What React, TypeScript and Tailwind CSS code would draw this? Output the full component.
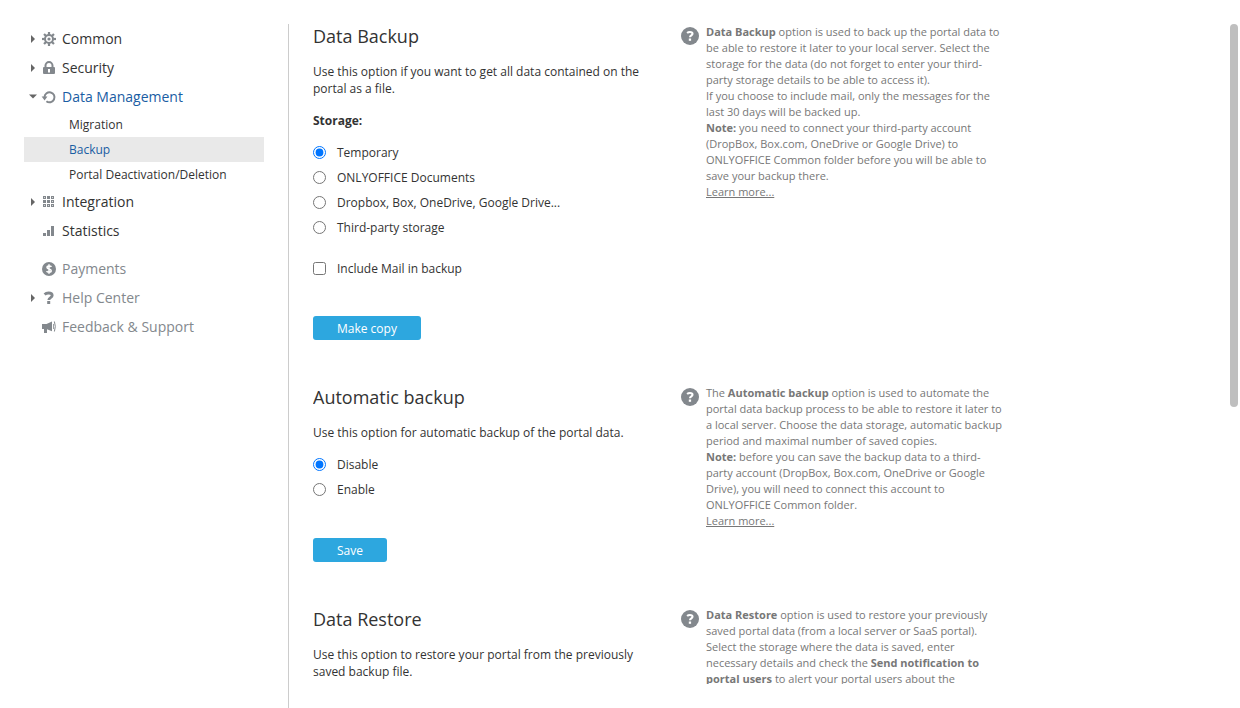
import type { ReactNode } from "react";

const ICON = "h-4 w-4 shrink-0 fill-[#83888d]";

function GearIcon() {
  const spokes = [0, 45, 90, 135, 180, 225, 270, 315];
  return (
    <svg viewBox="0 0 16 16" className={ICON} aria-hidden="true">
      <circle cx="8" cy="8" r="4" fill="none" stroke="#83888d" strokeWidth="2" />
      <circle cx="8" cy="8" r="1.6" />
      {spokes.map((angle) => (
        <rect key={angle} x="6.9" y="1" width="2.2" height="2.8" transform={`rotate(${angle} 8 8)`} />
      ))}
    </svg>
  );
}

function LockIcon() {
  return (
    <svg viewBox="0 0 16 16" className={ICON} aria-hidden="true">
      <path
        fillRule="evenodd"
        d="M3.5 7V5.6a4.5 4.5 0 0 1 9 0V7h.5q1 0 1 1v5q0 1-1 1H3q-1 0-1-1V8q0-1 1-1zM5.5 7h5V5.6a2.5 2.5 0 0 0-5 0zM7 9v3.4h2V9z"
      />
    </svg>
  );
}

function RestoreIcon() {
  return (
    <svg viewBox="0 0 16 16" className={ICON} aria-hidden="true">
      <path d="M3.5 8a5 5 0 1 1 1.9 4.2" fill="none" stroke="#83888d" strokeWidth="2" />
      <path d="M.6 7.4h5.8L3.6 11.4z" />
    </svg>
  );
}

function GridIcon() {
  const cells = [2, 6, 10];
  return (
    <svg viewBox="0 0 16 16" className={ICON} aria-hidden="true">
      {cells.map((y) => cells.map((x) => <rect key={`${x}-${y}`} x={x} y={y} width="3" height="3" />))}
      {[3, 11].map((y) => [3, 11].map((x) => <rect key={`${x}-${y}`} x={x} y={y} width="1" height="1" fill="#d5d7d9" />))}
      {[[7, 11], [11, 7]].map(([x, y]) => <rect key={`${x}-${y}`} x={x} y={y} width="1" height="1" fill="#d5d7d9" />)}
    </svg>
  );
}

function ChartIcon() {
  return (
    <svg viewBox="0 0 16 16" className={ICON} aria-hidden="true">
      <path d="M2 10h3v3H2zM6 7h3v6H6zM10 3h3v10h-3z" />
    </svg>
  );
}

function DollarIcon() {
  return (
    <svg viewBox="0 0 16 16" className={ICON} aria-hidden="true">
      <circle cx="8" cy="8" r="7" />
      <path
        d="M10.4 5.9C9.9 4.9 6 4.4 6 6.5c0 1.8 4.2 1.2 4.2 3.2 0 2-3.9 1.8-4.6.5M8 3.2v9.6"
        fill="none"
        stroke="#fff"
        strokeWidth="1.5"
      />
    </svg>
  );
}

function QuestionIcon() {
  return (
    <svg viewBox="0 0 16 16" className={ICON} aria-hidden="true">
      <path d="M3.6 4.4C4.6 3.4 6 3 7.6 3c2.4 0 3.6.9 3.6 2.5 0 2.2-3.4 2-3.4 4.5" fill="none" stroke="#83888d" strokeWidth="2.8" />
      <rect x="6.2" y="11" width="3" height="3" />
    </svg>
  );
}

function MegaphoneIcon() {
  return (
    <svg viewBox="0 0 16 16" className={ICON} aria-hidden="true">
      <path d="M1 5h4.5L11 2.5v9.8L6 10.2V14H3v-4H1z" />
      <path d="M12.5 5v5" fill="none" stroke="#83888d" strokeWidth="0.8" />
      <path d="M13.4 2.5q1.8 5 0 10" fill="none" stroke="#83888d" />
    </svg>
  );
}

function HelpBadge() {
  return (
    <svg viewBox="0 0 18 18" className="mt-[3px] h-[18px] w-[18px] shrink-0 fill-[#83888d]" aria-hidden="true">
      <circle cx="9" cy="9" r="9" />
      <path d="M6.1 6C6.9 5.3 7.8 5 8.9 5c1.7 0 2.6.6 2.6 1.8 0 1.6-2.5 1.5-2.5 3.5" fill="none" stroke="#fff" strokeWidth="2.1" />
      <rect x="7.8" y="11.5" width="2.3" height="2.3" fill="#fff" />
    </svg>
  );
}

type NavRowProps = {
  icon: ReactNode;
  label: string;
  arrow?: "right" | "down";
  tone?: "normal" | "active" | "muted";
};

const TONES = { normal: "text-[#333]", active: "text-[#1a5da3]", muted: "text-[#83888d]" };

function NavRow({ icon, label, arrow, tone = "normal" }: NavRowProps) {
  return (
    <a href="#" className={`flex h-[29px] items-center pl-[5px] text-sm ${TONES[tone]}`}>
      <svg viewBox="0 0 8 8" className="mr-1 h-2 w-2 shrink-0 fill-[#666]" aria-hidden="true">
        {arrow === "right" && <path d="M2 0v8L6 4z" />}
        {arrow === "down" && <path d="M0 1.5h8L4 5.5z" />}
      </svg>
      {icon}
      <span className="ml-[5px]">{label}</span>
    </a>
  );
}

function SubRow({ label, selected }: { label: string; selected?: boolean }) {
  return (
    <a
      href="#"
      className={`flex h-[25px] items-center pl-[45px] ${selected ? "bg-[#e9e9e9] text-[#1a5da3]" : ""}`}
    >
      {label}
    </a>
  );
}

function Choice({ type = "radio", name, label, checked }: { type?: string; name: string; label: string; checked?: boolean }) {
  return (
    <label className="flex h-[25px] items-center gap-[11px]">
      <input type={type} name={name} defaultChecked={checked} className="m-0 h-[13px] w-[13px]" />
      {label}
    </label>
  );
}

function ActionButton({ children }: { children: ReactNode }) {
  return (
    <button type="button" className="block h-6 rounded-[3px] bg-[#2da7df] px-6 text-white">
      {children}
    </button>
  );
}

function Section({ title, help, children }: { title: string; help: ReactNode; children: ReactNode }) {
  return (
    <section className="mb-[45px] flex gap-6">
      <div className="w-[344px]">
        <h2 className="mb-[15px] text-lg leading-6">{title}</h2>
        {children}
      </div>
      <aside className="flex w-[325px] gap-[7px] text-[11px] leading-4 text-[#777]">
        <HelpBadge />
        <div>{help}</div>
      </aside>
    </section>
  );
}

function LearnMore() {
  return (
    <a href="#" className="block underline">
      Learn more...
    </a>
  );
}

export default function App() {
  return (
    <div className="flex h-screen bg-white pt-6 pl-6 font-['Open_Sans',sans-serif] text-xs leading-[17px] text-[#333]">
      <nav className="w-60 shrink-0">
        <NavRow icon={<GearIcon />} label="Common" arrow="right" />
        <NavRow icon={<LockIcon />} label="Security" arrow="right" />
        <NavRow icon={<RestoreIcon />} label="Data Management" arrow="down" tone="active" />
        <div className="pt-px">
          <SubRow label="Migration" />
          <SubRow label="Backup" selected />
          <SubRow label="Portal Deactivation/Deletion" />
        </div>
        <NavRow icon={<GridIcon />} label="Integration" arrow="right" />
        <NavRow icon={<ChartIcon />} label="Statistics" />
        <div className="pt-[9px]">
          <NavRow icon={<DollarIcon />} label="Payments" tone="muted" />
          <NavRow icon={<QuestionIcon />} label="Help Center" arrow="right" tone="muted" />
          <NavRow icon={<MegaphoneIcon />} label="Feedback & Support" tone="muted" />
        </div>
      </nav>

      <div className="ml-6 flex min-w-0 flex-1 border-l border-[#ccc] pr-0.5 pb-6 pl-6">
        <main className="min-w-0 flex-1 overflow-x-hidden overflow-y-auto [scrollbar-width:none]">
          <Section
            title="Data Backup"
            help={
              <>
                <p>
                  <b>Data Backup</b> option is used to back up the portal data to be able to restore it later to your
                  local server. Select the storage for the data (do not forget to enter your third-party storage
                  details to be able to access it).
                </p>
                <p>If you choose to include mail, only the messages for the last 30 days will be backed up.</p>
                <p>
                  <b>Note:</b> you need to connect your third-party account (DropBox, Box.com, OneDrive or Google
                  Drive) to ONLYOFFICE Common folder before you will be able to save your backup there.
                </p>
                <LearnMore />
              </>
            }
          >
            <p>Use this option if you want to get all data contained on the portal as a file.</p>
            <fieldset>
              <legend className="pt-[15px] pb-[11px] font-bold">Storage:</legend>
              <Choice name="storage" label="Temporary" checked />
              <Choice name="storage" label="ONLYOFFICE Documents" />
              <Choice name="storage" label="Dropbox, Box, OneDrive, Google Drive..." />
              <Choice name="storage" label="Third-party storage" />
            </fieldset>
            <div className="pt-4 pb-[35px]">
              <Choice type="checkbox" name="mail" label="Include Mail in backup" />
            </div>
            <ActionButton>Make copy</ActionButton>
          </Section>

          <Section
            title="Automatic backup"
            help={
              <>
                <p>
                  The <b>Automatic backup</b> option is used to automate the portal data backup process to be able to
                  restore it later to a local server. Choose the data storage, automatic backup period and maximal
                  number of saved copies.
                </p>
                <p>
                  <b>Note:</b> before you can save the backup data to a third-party account (DropBox, Box.com,
                  OneDrive or Google Drive), you will need to connect this account to ONLYOFFICE Common folder.
                </p>
                <LearnMore />
              </>
            }
          >
            <p>Use this option for automatic backup of the portal data.</p>
            <div className="pt-[11px] pb-9">
              <Choice name="auto" label="Disable" checked />
              <Choice name="auto" label="Enable" />
            </div>
            <ActionButton>Save</ActionButton>
          </Section>

          <Section
            title="Data Restore"
            help={
              <p>
                <b>Data Restore</b> option is used to restore your previously saved portal data (from a local server
                or SaaS portal). Select the storage where the data is saved, enter necessary details and check the{" "}
                <b>Send notification to portal users</b> to alert your portal users about the
              </p>
            }
          >
            <p>Use this option to restore your portal from the previously saved backup file.</p>
          </Section>
        </main>
        <div className="h-[58%] w-2 shrink-0 rounded-sm bg-[#bfbfbf]" />
      </div>
    </div>
  );
}
